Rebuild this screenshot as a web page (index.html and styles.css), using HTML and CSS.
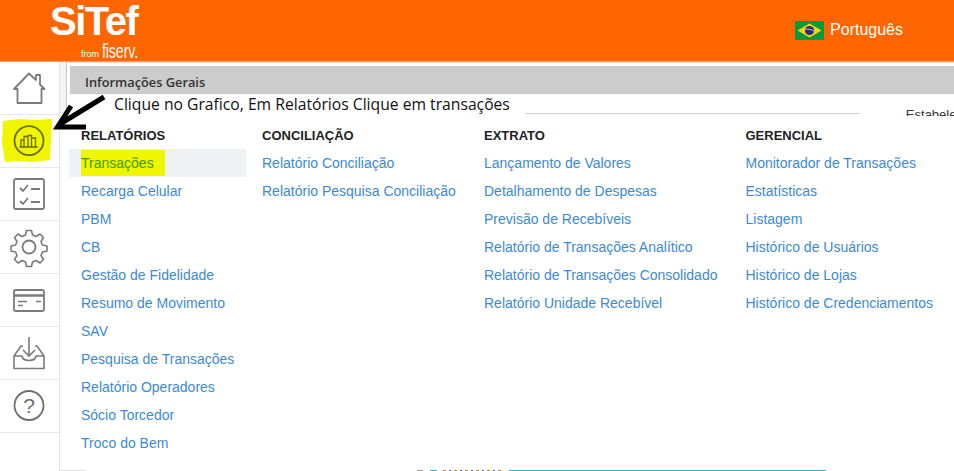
FILE: index.html
```html
<!DOCTYPE html>
<html lang="pt-BR">
<head>
<meta charset="utf-8">
<title>SiTef</title>
<link rel="stylesheet" href="styles.css">
</head>
<body>
<header class="topbar">
  <div class="logo">
    <div class="logo-name">SiTef</div>
    <div class="logo-sub"><span class="logo-from">from</span><span class="logo-fiserv">fiserv.</span></div>
  </div>
  <div class="lang">
    <svg class="flag" viewBox="0 0 29 19" width="29" height="19"><rect width="29" height="19" fill="#0a9a3c"/><path d="M14.5 2.5 26.5 9.5 14.5 16.5 2.5 9.5Z" fill="#fbd40a"/><circle cx="14.5" cy="9.5" r="4.6" fill="#2b2a7f"/><path d="M10.2 8.4c3-.6 6-.1 8.600 1.600" fill="none" stroke="#dfe3ee" stroke-width=".8"/></svg>
    <span>Português</span>
  </div>
</header>
<div class="main">
  <nav class="sidebar">
    <a class="side-item">
      <svg class="ico" viewBox="0 0 60 53" width="60" height="53"><path d="M14 27 29 11.500 36 18V13H40V22.500L44.500 27H41.500V41H17.500V27Z" fill="none" stroke="#7b7b7b" stroke-width="1.800" stroke-linejoin="round"/></svg>
    </a>
    <a class="side-item">
      <svg class="ico" viewBox="0 0 60 53" width="60" height="53"><path d="M3 6 20 4 36 5 52 4 51 24 50 45 32 47 18 46 5 47 2 28Z" fill="#f0f500"/><circle cx="29" cy="25.700" r="14.500" fill="none" stroke="#6b6b00" stroke-width="1.800"/><path d="M21 32V25h3v7M24 32V21.500h4V32M28 32V20.500h3.500V32M31.500 32V23h4v9M19.500 32h18" fill="none" stroke="#6b6b00" stroke-width="1.300"/></svg>
    </a>
    <a class="side-item">
      <svg class="ico" viewBox="0 0 60 53" width="60" height="53"><rect x="14" y="11" width="30" height="30" rx="2" fill="none" stroke="#7b7b7b" stroke-width="1.800"/><path d="M20 20l3 3 5-6M20 33l3 3 5-6M31 21h9M31 34h9" fill="none" stroke="#7b7b7b" stroke-width="1.800"/></svg>
    </a>
    <a class="side-item">
      <svg class="ico" viewBox="0 0 60 53" width="60" height="53"><g transform="translate(0 -1)"><path d="M26.500 10.500h5l1 4.500 3.500 1.500 4-2.500 3.500 3.500-2.500 4 1.500 3.500 4.500 1v5l-4.500 1-1.500 3.500 2.500 4-3.500 3.500-4-2.500-3.500 1.500-1 4.500h-5l-1-4.500-3.500-1.500-4 2.500-3.500-3.500 2.500-4-1.500-3.500-4.500-1v-5l4.500-1 1.500-3.500-2.500-4 3.500-3.500 4 2.500 3.500-1.500Z" fill="none" stroke="#7b7b7b" stroke-width="1.600" stroke-linejoin="round"/><circle cx="29" cy="27" r="6.500" fill="none" stroke="#7b7b7b" stroke-width="1.800"/></g></svg>
    </a>
    <a class="side-item">
      <svg class="ico" viewBox="0 0 60 53" width="60" height="53"><rect x="14" y="16" width="30" height="21" rx="2" fill="none" stroke="#7b7b7b" stroke-width="1.800"/><path d="M14 21.500h30" stroke="#7b7b7b" stroke-width="2.500"/><path d="M18 27.500h9M18 31.500h5M36 27.500h5" stroke="#7b7b7b" stroke-width="1.400"/></svg>
    </a>
    <a class="side-item">
      <svg class="ico" viewBox="0 0 60 53" width="60" height="53"><path d="M29 10v19M23 23l6 6 6-6" fill="none" stroke="#7b7b7b" stroke-width="1.600"/><path d="M23 19h-2l-7 10v12.500h30V29l-7-10h-2M14 29h8c1 6 13 6 14 0h8" fill="none" stroke="#7b7b7b" stroke-width="1.600" stroke-linejoin="round"/></svg>
    </a>
    <a class="side-item">
      <svg class="ico" viewBox="0 0 60 53" width="60" height="53"><circle cx="29" cy="25.500" r="14.500" fill="none" stroke="#6f6f6f" stroke-width="1.800"/><text class="help" x="29" y="33" text-anchor="middle">?</text></svg>
    </a>
  </nav>
  <div class="content">
    <div class="band">
      <div class="band-inner">
        <h1 class="section-title">Informações Gerais</h1>
        <div class="note-row">
          <span class="note">Clique no Grafico, Em Relatórios Clique em transações</span>
          <span class="note-rule"></span>
          <span class="note-label">Estabelecimento</span>
        </div>
      </div>
    </div>
    <div class="menu">
      <section class="col col-a">
        <h2>RELATÓRIOS</h2>
        <ul>
          <li class="active"><a><mark>Transações</mark></a></li>
          <li><a>Recarga Celular</a></li>
          <li><a>PBM</a></li>
          <li><a>CB</a></li>
          <li><a>Gestão de Fidelidade</a></li>
          <li><a>Resumo de Movimento</a></li>
          <li><a>SAV</a></li>
          <li><a>Pesquisa de Transações</a></li>
          <li><a>Relatório Operadores</a></li>
          <li><a>Sócio Torcedor</a></li>
          <li><a>Troco do Bem</a></li>
        </ul>
      </section>
      <section class="col col-b">
        <h2>CONCILIAÇÃO</h2>
        <ul>
          <li><a>Relatório Conciliação</a></li>
          <li><a>Relatório Pesquisa Conciliação</a></li>
        </ul>
      </section>
      <section class="col col-c">
        <h2>EXTRATO</h2>
        <ul>
          <li><a>Lançamento de Valores</a></li>
          <li><a>Detalhamento de Despesas</a></li>
          <li><a>Previsão de Recebíveis</a></li>
          <li><a>Relatório de Transações Analítico</a></li>
          <li><a>Relatório de Transações Consolidado</a></li>
          <li><a>Relatório Unidade Recebível</a></li>
        </ul>
      </section>
      <section class="col col-d">
        <h2>GERENCIAL</h2>
        <ul>
          <li><a>Monitorador de Transações</a></li>
          <li><a>Estatísticas</a></li>
          <li><a>Listagem</a></li>
          <li><a>Histórico de Usuários</a></li>
          <li><a>Histórico de Lojas</a></li>
          <li><a>Histórico de Credenciamentos</a></li>
        </ul>
      </section>
    </div>
    <div class="peek"><i class="peek-edge"></i><i class="peek-grey"></i><i class="peek-teal"></i><i class="peek-specks"></i><i class="peek-line"></i></div>
  </div>
</div>
<svg class="arrow" viewBox="0 0 120 140" width="120" height="140"><path d="M104 97 60 124M71 106 57.500 127H86" fill="none" stroke="#000" stroke-width="5"/></svg>
</body>
</html>
```
FILE: styles.css
```css
* { box-sizing: border-box; }
html, body { margin: 0; height: 471px; overflow: hidden; background: #fff; }
body { font-family: "Liberation Sans", Arial, sans-serif; position: relative; }

.topbar { height: 62px; background: #ff6600; display: flex; justify-content: space-between; color: #fff; padding: 0 51px 0 50px; border-bottom: 1px solid #e9a070; }
.logo { width: 90px; }
.logo-name { font-size: 40px; line-height: 40px; font-weight: 700; letter-spacing: -1.500px; margin-top: 1px; }
.logo-sub { display: flex; align-items: flex-end; height: 19px; padding-left: 31px; }
.logo-from { font-size: 9px; line-height: 12px; width: 21px; flex: none; }
.logo-fiserv { font-size: 21px; line-height: 19px; display: inline-block; transform: scaleX(.68); transform-origin: left bottom; letter-spacing: -.2px; }
.lang { display: flex; align-items: center; gap: 6px; font-size: 16px; height: 60px; }
.flag { display: block; }

.main { display: flex; height: 409px; }
.sidebar { width: 60px; flex: none; border-right: 1px solid #e4e4e4; }
.side-item { display: block; height: 53px; border-bottom: 1px solid #e4e8e8; }
.ico { display: block; }
.help { font: 400 21px "Liberation Sans", sans-serif; fill: #6f6f6f; }

.content { flex: 1; min-width: 0; display: flex; flex-direction: column; }
.band { height: 54px; background: #f3f3f3; padding-left: 6px; flex: none; }
.band-inner { height: 54px; background: #fff; border-left: 1px solid #cbc7c5; border-top: 1px solid #ddd; padding: 3px 0 0 3px; }
.section-title { margin: 0; height: 28px; background: #cccccc; border-bottom: 1px solid #c4c4c4; font-size: 12.800px; font-family: "Open Sans", sans-serif; line-height: 32px; font-weight: 600; color: #333; padding-left: 15px; overflow: hidden; }
.note-row { display: flex; height: 22px; overflow: hidden; padding-left: 44px; }
.note { font-family: "Open Sans", sans-serif; font-size: 15.700px; line-height: 20px; color: #111; white-space: nowrap; }
.note-rule { width: 335px; height: 1px; background: #cfcfcf; margin: 19px 0 0 15px; flex: none; }
.note-label { font-size: 13px; color: #333; line-height: 16px; margin: 13px 0 0 46px; white-space: nowrap; }

.menu { flex: 1; display: flex; padding: 12px 0 0 21px; background: #fff; }
.col h2 { margin: 0; font-size: 13px; line-height: 16px; font-weight: 700; color: #222; height: 21px; }
.col ul { list-style: none; margin: 0; padding: 0; }
.col li { height: 28px; line-height: 28px; font-size: 14px; color: #3d8ad0; white-space: nowrap; }
.col-a { width: 181px; }
.col-b { width: 222px; }
.col-c { width: 261.500px; }
.col .active { background: #eef2f5; margin: 0 16px 0 -12px; padding-left: 12px; }
mark { background: #f0f500; color: #3f9b00; display: inline-block; line-height: 26px; padding-right: 11px; }

.peek { height: 1px; flex: none; display: flex; align-items: stretch; }
.peek i { display: block; height: 1px; }
.peek-edge { width: 26px; background: #e2e2e2; }
.peek-grey { width: 6px; margin-left: 331px; background: #999; }
.peek-teal { width: 7px; margin-left: 7px; background: #36b4cc; }
.peek-specks { width: 60px; margin-left: 6px; background: repeating-linear-gradient(90deg, #c9851f 0 3px, #fff 3px 6px, #2b6aa8 6px 8px, #fff 8px 11px); }
.peek-line { width: 317px; margin-left: 6px; background: #36b4cc; }

.arrow { position: absolute; left: 0; top: 0; overflow: visible; }
```
